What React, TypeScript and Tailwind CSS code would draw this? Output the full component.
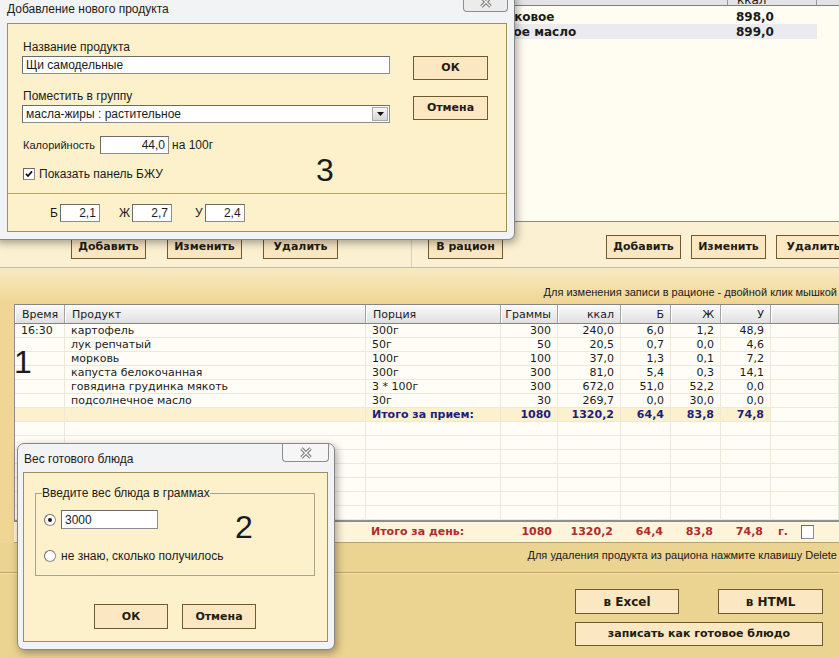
import React from 'react'

const verd = '[font-family:"DejaVu_Sans",Verdana,sans-serif]'
const arial = '[font-family:"Liberation_Sans",Arial,sans-serif]'
const cols = 'grid grid-cols-[50px_301px_135px_57px_63px_50px_50px_50px_1fr]'

const rows = [
  ['16:30', 'картофель', '300г', '300', '240,0', '6,0', '1,2', '48,9'],
  ['', 'лук репчатый', '50г', '50', '20,5', '0,7', '0,0', '4,6'],
  ['', 'морковь', '100г', '100', '37,0', '1,3', '0,1', '7,2'],
  ['', 'капуста белокочанная', '300г', '300', '81,0', '5,4', '0,3', '14,1'],
  ['', 'говядина грудинка мякоть', '3 * 100г', '300', '672,0', '51,0', '52,2', '0,0'],
  ['', 'подсолнечное масло', '30г', '30', '269,7', '0,0', '30,0', '0,0'],
]
const heads = ['Время', 'Продукт', 'Порция', 'Граммы', 'ккал', 'Б', 'Ж', 'У', '']

function Btn({ children, className = '' }: { children: React.ReactNode; className?: string }) {
  return (
    <div className={`flex shrink-0 items-center justify-center border border-[#6e5b2d] bg-[#fce7c3] text-[11px] font-bold text-[#231c10] ${verd} ${className}`}>
      {children}
    </div>
  )
}

function Field({ children, className = '', right = false }: { children: React.ReactNode; className?: string; right?: boolean }) {
  return (
    <div className={`flex h-[18px] shrink-0 items-center border border-[#8c8c8c] border-l-[#6b6b6b] border-t-[#6b6b6b] bg-white px-[3px] text-[12px] ${right ? 'justify-end' : ''} ${className}`}>
      {children}
    </div>
  )
}

function Radio({ on = false }: { on?: boolean }) {
  return (
    <div className="flex h-[12px] w-[12px] shrink-0 items-center justify-center rounded-full border border-[#8d8d8d] border-l-[#6a6a6a] border-t-[#6a6a6a] bg-white">
      {on && <div className="h-[4px] w-[4px] rounded-full bg-[#1a1a1a]" />}
    </div>
  )
}

function CloseX() {
  return (
    <svg width="14" height="12" viewBox="0 0 14 12">
      <path d="M2.5 1.5 L11.5 10.5 M11.5 1.5 L2.5 10.5" stroke="#7a7a7a" strokeWidth="3.4" />
      <path d="M2.5 1.5 L11.5 10.5 M11.5 1.5 L2.5 10.5" stroke="#f6f6f6" strokeWidth="1.3" />
    </svg>
  )
}

function Cell({ i, children, className = '' }: { i: number; children?: React.ReactNode; className?: string }) {
  const num = i >= 3 && i <= 7
  return (
    <div className={`flex items-center whitespace-nowrap border-b border-r border-[#eee8d8] ${num ? 'justify-end pr-[6px]' : 'pl-[6px]'} ${className}`}>
      {children}
    </div>
  )
}

export default function App() {
  return (
    <div className={`relative h-[658px] w-[839px] overflow-hidden bg-[#ebd391] text-[#1b1b1b] ${verd}`}>
      {/* upper panels */}
      <div className="flex h-[268px] border-b border-[#c4bda8]">
        <div className="flex w-[412px] shrink-0 flex-col border-r border-[#d8d0ba]">
          <div className="h-[222px] border-b border-[#8f8a78] bg-[#fffdf2]" />
          <div className="flex flex-1 items-start gap-[21px] bg-[#fbf0d2] pl-[71px] pt-[13px]">
            <Btn className="h-[24px] w-[75px]">Добавить</Btn>
            <Btn className="h-[24px] w-[75px]">Изменить</Btn>
            <Btn className="h-[24px] w-[75px]">Удалить</Btn>
          </div>
        </div>
        <div className="flex min-w-0 flex-1 flex-col">
          <div className="flex h-[222px] flex-col border-b border-[#8f8a78] bg-[#fffdf2]">
            <div className="flex h-[6px] overflow-hidden border-b border-[#7e7e7e] bg-[#e3e3e3]">
              <div className="w-[316px] shrink-0 border-r border-[#9a9a9a]" />
              <div className="-mt-[7px] w-[89px] shrink-0 border-r border-[#9a9a9a] pl-[9px] text-[12px] leading-[14px]">ккал</div>
            </div>
            <div className="pt-[3px] text-[12px] font-bold">
              <div className="flex h-[15px] items-center">
                <span className="w-[316px] shrink-0 whitespace-nowrap pl-[38px]">масло маковое</span>
                <span className="pl-[8px]">898,0</span>
              </div>
              <div className="flex h-[15px] w-[405px] items-center bg-[#ebebef]">
                <span className="w-[316px] shrink-0 whitespace-nowrap pl-[38px]">кукурузное масло</span>
                <span className="pl-[8px]">899,0</span>
              </div>
            </div>
          </div>
          <div className="flex flex-1 items-start bg-[#fbf0d2] pl-[16px] pt-[13px]">
            <Btn className="h-[24px] w-[75px]">В рацион</Btn>
            <div className="ml-[103px] flex shrink-0 gap-[10px]">
              <Btn className="h-[24px] w-[75px]">Добавить</Btn>
              <Btn className="h-[24px] w-[75px]">Изменить</Btn>
              <Btn className="h-[24px] w-[75px]">Удалить</Btn>
            </div>
          </div>
        </div>
      </div>

      {/* ration panel */}
      <div className="flex h-[390px] flex-col">
        <div className={`flex h-[36px] items-end justify-end whitespace-nowrap bg-gradient-to-b from-[#f8ebc2] to-[#efd593] pb-[5px] pr-[2px] text-[11px] leading-[14px] ${arial}`}>
          Для изменения записи в рационе - двойной клик мышкой
        </div>
        <div className="flex">
          <div className="w-[14px] shrink-0 bg-[#efd695]" />
          <div className="flex min-w-0 flex-1 flex-col">
            <div className="border-b-2 border-l border-[#8e8e8e] bg-[#fffdf5] text-[11px] leading-[13px]">
              <div className={`${cols} h-[20px] border-b border-t border-[#858585]`}>
                {heads.map((h, i) => (
                  <div key={i} className={`flex items-center border-l border-r border-l-white border-r-[#a3a3a3] bg-gradient-to-b from-[#fbfbfb] to-[#e0e0e0] ${i >= 3 && i <= 7 ? 'justify-end pr-[6px]' : 'pl-[6px]'}`}>
                    {h}
                  </div>
                ))}
              </div>
              {rows.map((r, ri) => (
                <div key={ri} className={`${cols} h-[14px]`}>
                  {r.map((v, i) => (
                    <Cell key={i} i={i}>{v}</Cell>
                  ))}
                  <Cell i={8} />
                </div>
              ))}
              <div className={`${cols} h-[14px] font-bold text-[#1e1e7e]`}>
                <Cell i={0} className="bg-[#fcf1cf]" />
                <Cell i={1} className="bg-[#fcf1cf]" />
                <Cell i={2} className="bg-[#fcf1cf]">Итого за прием:</Cell>
                <Cell i={3} className="bg-[#fcf1cf]">1080</Cell>
                <Cell i={4} className="bg-[#fcf1cf]">1320,2</Cell>
                <Cell i={5} className="bg-[#fcf1cf]">64,4</Cell>
                <Cell i={6} className="bg-[#fcf1cf]">83,8</Cell>
                <Cell i={7} className="bg-[#fcf1cf]">74,8</Cell>
                <Cell i={8} />
              </div>
              {Array.from({ length: 7 }).map((_, ri) => (
                <div key={ri} className={`${cols} h-[14px]`}>
                  {Array.from({ length: 9 }).map((__, i) => (
                    <Cell key={i} i={i} />
                  ))}
                </div>
              ))}
            </div>
            <div className={`${cols} h-[21px] border-b border-[#b9a266] bg-[#fdf4d9] text-[11px] font-bold text-[#b12a2c]`}>
              <div />
              <div />
              <div className="flex items-center pl-[6px]">Итого за день:</div>
              <div className="flex items-center justify-end pr-[5px]">1080</div>
              <div className="flex items-center justify-end pr-[7px]">1320,2</div>
              <div className="flex items-center justify-end pr-[7px]">64,4</div>
              <div className="flex items-center justify-end pr-[7px]">83,8</div>
              <div className="flex items-center justify-end pr-[7px]">74,8</div>
              <div className="flex items-center pl-[8px]">
                <span>г.</span>
                <div className="ml-[13px] h-[14px] w-[13px] border border-[#8d8d8d] border-l-[#6a6a6a] border-t-[#6a6a6a] bg-white" />
              </div>
            </div>
          </div>
        </div>
        <div className={`flex h-[29px] items-start justify-end whitespace-nowrap pr-[2px] pt-[5px] text-[11px] leading-[14px] ${arial}`}>
          Для удаления продукта из рациона нажмите клавишу Delete
        </div>
        <div className="h-[2px] border-t border-[#c3a65e] bg-[#f3e2ae]" />
        <div className="flex flex-1 flex-col items-end pr-[16px] pt-[15px]">
          <div className="flex gap-[39px]">
            <Btn className="h-[25px] w-[104px] text-[12px]">в Excel</Btn>
            <Btn className="h-[25px] w-[105px] text-[12px]">в HTML</Btn>
          </div>
          <Btn className="mt-[8px] h-[24px] w-[248px]">записать как готовое блюдо</Btn>
        </div>
      </div>

      {/* dialog 3: new product */}
      <div className={`absolute left-[-7px] top-[-8px] flex h-[248px] w-[522px] flex-col rounded-[7px] border border-[#878787] bg-[#f2f3f4] shadow-[2px_3px_8px_rgba(0,0,0,0.35)] ${arial} text-[12px] leading-[14px]`}>
        <div className="relative h-[30px] pl-[13px] pt-[9px]">
          Добавление нового продукта
          <div className="absolute right-[6px] top-0 flex h-[19px] w-[45px] items-end justify-center rounded-b-[4px] border border-t-0 border-[#8d8d8d] bg-[#ececec] pb-[3px]">
            <CloseX />
          </div>
        </div>
        <div className="mb-[7px] ml-[13px] mr-[7px] flex flex-1 flex-col border border-[#a08f5c] bg-[#fcf1cb]">
          <div className="flex h-[170px] border-b border-[#baa56d]">
            <div className="flex w-[382px] shrink-0 flex-col pl-[14px] pt-[16px]">
              <div className="pl-[1px]">Название продукта</div>
              <Field className="mt-[2px] w-[368px]">Щи самодельные</Field>
              <div className="mt-[15px] pl-[1px]">Поместить в группу</div>
              <div className="mt-[2px] flex h-[18px] w-[368px] items-center border border-[#8c8c8c] border-l-[#6b6b6b] border-t-[#6b6b6b] bg-white pl-[3px]">
                <span className="flex-1">масла-жиры : растительное</span>
                <div className="mr-[1px] flex h-[14px] w-[16px] items-center justify-center border border-[#a9a9a9] bg-gradient-to-b from-[#f7f7f7] to-[#d6d6d6]">
                  <svg width="7" height="4" viewBox="0 0 7 4">
                    <path d="M0 0H7L3.5 4Z" fill="#111" />
                  </svg>
                </div>
              </div>
              <div className="mt-[13px] flex h-[18px] items-center">
                <span className="w-[78px] shrink-0 whitespace-nowrap pl-[1px] text-[11px]">Калорийность</span>
                <Field right className="w-[69px]">44,0</Field>
                <span className="ml-[3px]">на 100г</span>
              </div>
              <div className="mt-[14px] flex h-[12px] items-center">
                <div className="ml-[1px] flex h-[12px] w-[12px] items-center justify-center border border-[#8d8d8d] border-l-[#6a6a6a] border-t-[#6a6a6a] bg-white">
                  <svg width="8" height="8" viewBox="0 0 8 8">
                    <path d="M1 3.8 L3 6 L7 1.3" stroke="#111" strokeWidth="1.8" fill="none" />
                  </svg>
                </div>
                <span className="ml-[4px]">Показать панель БЖУ</span>
              </div>
            </div>
            <div className="ml-[23px] flex flex-col gap-[16px] pt-[32px]">
              <Btn className="h-[24px] w-[75px]">ОК</Btn>
              <Btn className="h-[24px] w-[75px]">Отмена</Btn>
            </div>
          </div>
          <div className="flex flex-1 items-center pl-[42px]">
            <span>Б</span>
            <Field right className="ml-[2px] w-[40px]">2,1</Field>
            <span className="ml-[19px]">Ж</span>
            <Field right className="ml-[2px] w-[40px]">2,7</Field>
            <span className="ml-[23px]">У</span>
            <Field right className="ml-[2px] w-[40px]">2,4</Field>
          </div>
        </div>
      </div>

      {/* dialog 2: finished dish weight */}
      <div className={`absolute left-[17px] top-[443px] flex h-[207px] w-[318px] flex-col rounded-[7px] border border-[#878787] bg-[#f2f3f4] shadow-[2px_3px_8px_rgba(0,0,0,0.35)] ${arial} text-[12px] leading-[14px]`}>
        <div className="relative h-[28px] pl-[6px] pt-[8px]">
          Вес готового блюда
          <div className="absolute right-[5px] top-0 flex h-[18px] w-[47px] items-center justify-center rounded-b-[4px] border border-t-0 border-[#8d8d8d] bg-[#f6f6f6]">
            <CloseX />
          </div>
        </div>
        <div className="mb-[7px] ml-[5px] mr-[6px] flex flex-1 flex-col border border-[#a08f5c] bg-[#fcf1cb]">
          <fieldset className="ml-[11px] mt-[13px] h-[90px] w-[280px] border border-[#a8a290]">
            <legend className="ml-[6px] px-0 leading-[14px]">Введите вес блюда в граммах</legend>
            <div className="flex flex-col pl-[8px] pt-[10px]">
              <div className="flex h-[19px] items-center">
                <Radio on />
                <Field className="ml-[5px] h-[19px] w-[97px] px-[2px]">3000</Field>
              </div>
              <div className="mt-[17px] flex h-[19px] items-center">
                <Radio />
                <span className="ml-[5px]">не знаю, сколько получилось</span>
              </div>
            </div>
          </fieldset>
          <div className="ml-[70px] mt-[28px] flex gap-[14px]">
            <Btn className="h-[25px] w-[74px]">ОК</Btn>
            <Btn className="h-[25px] w-[74px]">Отмена</Btn>
          </div>
        </div>
      </div>

      {/* annotation numbers */}
      <div className={`absolute left-[14px] top-[346px] text-[32px] leading-none ${arial}`}>1</div>
      <div className={`absolute left-[316px] top-[154px] text-[32px] leading-none ${arial}`}>3</div>
      <div className={`absolute left-[235px] top-[511px] text-[32px] leading-none ${arial}`}>2</div>
    </div>
  )
}
